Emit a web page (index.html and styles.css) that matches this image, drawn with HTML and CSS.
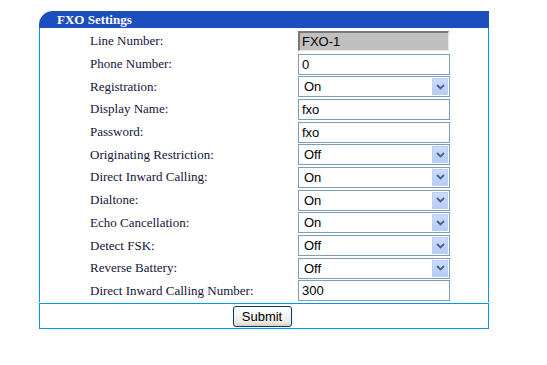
FILE: index.html
```html
<!DOCTYPE html>
<html lang="en">
<head>
    <meta charset="UTF-8">
    <title>FXO Settings</title>
    <link rel="stylesheet" href="styles.css">
</head>
<body>
    <div class="panel">
        <div class="panel-title">FXO Settings</div>
        <form class="panel-body">
            <div class="row">
                <label>Line Number:</label>
                <input type="text" class="field readonly" value="FXO-1" readonly>
            </div>
            <div class="row">
                <label>Phone Number:</label>
                <input type="text" class="field" value="0">
            </div>
            <div class="row">
                <label>Registration:</label>
                <div class="select"><span>On</span><i class="arrow"><svg width="9" height="6" viewBox="0 0 9 6"><path d="M1 1 L4.5 4.5 L8 1" fill="none" stroke="#4d6185" stroke-width="1.8"/></svg></i></div>
            </div>
            <div class="row">
                <label>Display Name:</label>
                <input type="text" class="field" value="fxo">
            </div>
            <div class="row">
                <label>Password:</label>
                <input type="text" class="field" value="fxo">
            </div>
            <div class="row">
                <label>Originating Restriction:</label>
                <div class="select"><span>Off</span><i class="arrow"><svg width="9" height="6" viewBox="0 0 9 6"><path d="M1 1 L4.5 4.5 L8 1" fill="none" stroke="#4d6185" stroke-width="1.8"/></svg></i></div>
            </div>
            <div class="row">
                <label>Direct Inward Calling:</label>
                <div class="select"><span>On</span><i class="arrow"><svg width="9" height="6" viewBox="0 0 9 6"><path d="M1 1 L4.5 4.5 L8 1" fill="none" stroke="#4d6185" stroke-width="1.8"/></svg></i></div>
            </div>
            <div class="row">
                <label>Dialtone:</label>
                <div class="select"><span>On</span><i class="arrow"><svg width="9" height="6" viewBox="0 0 9 6"><path d="M1 1 L4.5 4.5 L8 1" fill="none" stroke="#4d6185" stroke-width="1.8"/></svg></i></div>
            </div>
            <div class="row">
                <label>Echo Cancellation:</label>
                <div class="select"><span>On</span><i class="arrow"><svg width="9" height="6" viewBox="0 0 9 6"><path d="M1 1 L4.5 4.5 L8 1" fill="none" stroke="#4d6185" stroke-width="1.8"/></svg></i></div>
            </div>
            <div class="row">
                <label>Detect FSK:</label>
                <div class="select"><span>Off</span><i class="arrow"><svg width="9" height="6" viewBox="0 0 9 6"><path d="M1 1 L4.5 4.5 L8 1" fill="none" stroke="#4d6185" stroke-width="1.8"/></svg></i></div>
            </div>
            <div class="row">
                <label>Reverse Battery:</label>
                <div class="select"><span>Off</span><i class="arrow"><svg width="9" height="6" viewBox="0 0 9 6"><path d="M1 1 L4.5 4.5 L8 1" fill="none" stroke="#4d6185" stroke-width="1.8"/></svg></i></div>
            </div>
            <div class="row">
                <label>Direct Inward Calling Number:</label>
                <input type="text" class="field" value="300">
            </div>
        </form>
        <div class="panel-footer">
            <button type="button" class="submit-btn">Submit</button>
        </div>
    </div>
</body>
</html>
```

FILE: styles.css
```css
body {
    margin: 0;
    padding: 11px 0 0 39px;
    background: #ffffff;
    font-family: "Liberation Serif", "Times New Roman", serif;
    font-size: 13px;
    color: #14143c;
}
.panel {
    width: 450px;
}
.panel-title {
    height: 17px;
    line-height: 17px;
    background: #1d4ebd;
    color: #ffffff;
    font-weight: bold;
    padding-left: 18px;
    border-top-left-radius: 14px;
}
.panel-body {
    margin: 0;
    padding: 2px 0 0;
    border-left: 1px solid #0096f2;
    border-right: 1px solid #0096f2;
    width: 448px;
}
.row {
    display: flex;
    align-items: center;
    height: 22.7px;
}
.row label {
    width: 208px;
    padding-left: 50px;
}
.field {
    box-sizing: border-box;
    width: 152px;
    height: 21px;
    margin: 0;
    padding: 0 3px;
    border: 1px solid #7f9db9;
    font-family: "Liberation Sans", Arial, sans-serif;
    font-size: 13px;
    color: #000;
    background: #fff;
}
.field.readonly {
    background: #c0c0c0;
    border-top: 2px solid #7a7a7a;
    border-left: 2px solid #7a7a7a;
    border-right: 1px solid #eaeadc;
    border-bottom: 1px solid #eaeadc;
    padding-left: 2px;
    width: 151px;
    height: 20px;
}
.select {
    box-sizing: border-box;
    width: 152px;
    height: 21px;
    border: 1px solid #7f9db9;
    display: flex;
    align-items: center;
    justify-content: space-between;
    padding: 1px;
    font-family: "Liberation Sans", Arial, sans-serif;
    font-size: 13px;
    color: #000;
}
.select span {
    padding-left: 4px;
}
.arrow {
    width: 16px;
    height: 17px;
    background: linear-gradient(#cbdcfc, #b7cbf6);
    border: 1px solid #bccff5;
    box-sizing: border-box;
    display: flex;
    align-items: center;
    justify-content: center;
}
.panel-footer {
    border: 1px solid #0096f2;
    width: 448px;
    height: 24px;
    margin-top: 1px;
    display: flex;
    justify-content: center;
    align-items: center;
}
.submit-btn {
    width: 59px;
    height: 21px;
    margin-right: 4px;
    padding: 0;
    border: 1px solid #003c74;
    border-radius: 3px;
    background: linear-gradient(#ffffff, #ecebe6 80%, #d6d0c5);
    font-family: "Liberation Sans", Arial, sans-serif;
    font-size: 13px;
    color: #000;
}
```
